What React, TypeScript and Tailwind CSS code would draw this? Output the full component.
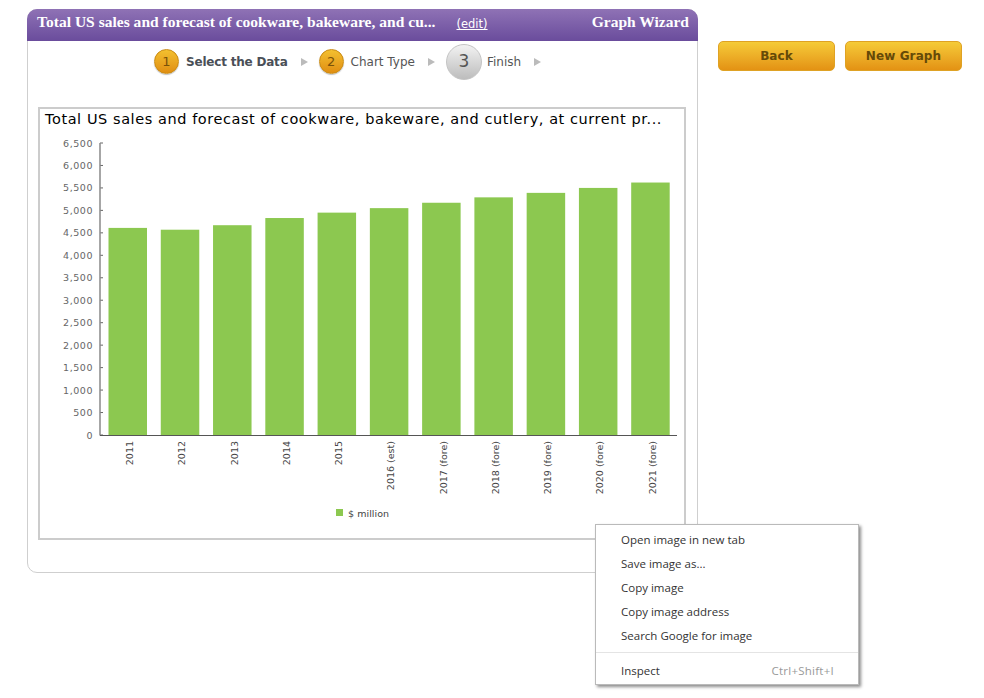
const years = ["2011", "2012", "2013", "2014", "2015", "2016 (est)", "2017 (fore)", "2018 (fore)", "2019 (fore)", "2020 (fore)", "2021 (fore)"];
const values = [4610, 4570, 4670, 4830, 4950, 5050, 5170, 5290, 5390, 5500, 5620];
const ticks = Array.from({ length: 14 }, (_, i) => i * 500);

// chart svg sits inside the 2px box border, so coords are page minus (40, 109)
function Chart() {
  const zero = 326;
  const perUnit = 292 / 6500;
  return (
    <svg width="644" height="429" viewBox="0 0 644 429" className="block">
      {ticks.map((t) => {
        const y = zero - t * perUnit;
        return (
          <g key={t}>
            <line x1="60" x2="63" y1={y} y2={y} stroke="#666" />
            <text x="53" y={y + 3.5} textAnchor="end" fontSize="9.5" letterSpacing="0.55" fill="#666" fontFamily="'DejaVu Sans', sans-serif">
              {t.toLocaleString("en-US")}
            </text>
          </g>
        );
      })}
      {values.map((v, i) => {
        const x = 68.5 + i * 52.27;
        const h = v * perUnit;
        return <rect key={years[i]} x={x} y={zero - h} width="38.5" height={h} fill="#8cc850" />;
      })}
      <line x1="60" x2="60" y1="34" y2="326.5" stroke="#888" strokeWidth="1.5" />
      <line x1="60" x2="637" y1="326.5" y2="326.5" stroke="#555" />
      {years.map((y, i) => {
        const x = 93 + i * 52.27;
        return (
          <text key={y} transform={`translate(${x} 332) rotate(-90)`} textAnchor="end" fontSize="9.5" fill="#444" fontFamily="'DejaVu Sans', sans-serif">
            {y}
          </text>
        );
      })}
      <rect x="296" y="400" width="7" height="7" fill="#8cc850" />
      <text x="308" y="408" fontSize="9.5" letterSpacing="0.05" fill="#444" fontFamily="'DejaVu Sans', sans-serif">
        $ million
      </text>
    </svg>
  );
}

function Arrow() {
  return <span className="w-0 h-0 border-y-[4px] border-y-transparent border-l-[7px] border-l-[#bbbbbb]" />;
}

function Step({ n, label, bold, className }: { n: number; label: string; bold?: boolean; className: string }) {
  return (
    <div className={`flex items-center ${className}`}>
      <span className="flex items-center justify-center w-[25px] h-[25px] rounded-full border border-[#c98a12] bg-gradient-to-b from-[#f3c02f] to-[#e08e12] text-[13px] text-[#7a5208] shrink-0 shadow-[0_1px_1px_rgba(0,0,0,0.25)]">
        {n}
      </span>
      <span className={`ml-[7px] text-[12px] ${bold ? "font-bold tracking-[-0.2px] text-[#4a4f57]" : "text-[#555]"}`}>{label}</span>
    </div>
  );
}

function WizardCard() {
  return (
    <div className="w-[671px] h-[564px] rounded-[10px] border border-[#cfcfcf] flex flex-col shrink-0">
      <div className="-mx-px -mt-px h-[32px] rounded-t-[10px] bg-gradient-to-b from-[#8f72b5] to-[#6a4c9c] flex items-center pl-[10px] pr-[9px] text-white font-['Liberation_Serif',serif] font-bold">
        <span className="mb-[7px] text-[15.5px] tracking-[0.02px] whitespace-nowrap">Total US sales and forecast of cookware, bakeware, and cu...</span>
        <span className="ml-[21px] text-[11.5px] font-normal underline font-['DejaVu_Sans',sans-serif]">(edit)</span>
        <span className="mb-[7px] ml-auto text-[15.5px]">Graph Wizard</span>
      </div>
      <div className="h-[66px] pt-px pl-[126px] flex items-start font-['DejaVu_Sans',sans-serif]">
        <Step n={1} label="Select the Data" bold className="mt-[7px]" />
        <span className="mt-[16px] ml-[13px] flex"><Arrow /></span>
        <Step n={2} label="Chart Type" className="mt-[7px] ml-[11px]" />
        <span className="mt-[16px] ml-[13px] flex"><Arrow /></span>
        <div className="flex items-center ml-[11px] mt-[2px]">
          <span className="flex items-center justify-center w-[36px] h-[36px] rounded-full border border-[#c4c4c4] bg-gradient-to-b from-[#f2f2f2] to-[#bdbdbd] text-[17px] text-[#555] shrink-0">
            3
          </span>
          <span className="ml-[5px] text-[12px] text-[#555]">Finish</span>
        </div>
        <span className="mt-[16px] ml-[13px] flex"><Arrow /></span>
      </div>
      <div className="mx-[10px] w-[648px] h-[433px] border-2 border-[#cccccc] relative">
        <div className="pl-[5px] h-[20px] text-[14.5px] leading-[20px] tracking-[0.57px] text-black whitespace-nowrap font-['DejaVu_Sans',sans-serif]">
          Total US sales and forecast of cookware, bakeware, and cutlery, at current pr...
        </div>
        <div className="absolute left-0 top-0">
          <Chart />
        </div>
      </div>
    </div>
  );
}

function ContextMenu() {
  const items = ["Open image in new tab", "Save image as...", "Copy image", "Copy image address", "Search Google for image"];
  return (
    <div className="absolute left-[595px] top-[524px] w-[264px] h-[161px] bg-white border border-[#bababa] shadow-[2px_2px_3px_rgba(0,0,0,0.45)] font-['Open_Sans',sans-serif] text-[11.5px] text-[#333] pt-[3px]">
      {items.map((t) => (
        <div key={t} className="h-[24px] leading-[24px] pl-[25px]">{t}</div>
      ))}
      <div className="h-px bg-[#e4e4e4] mt-[4px] mb-[6px]" />
      <div className="h-[24px] leading-[24px] pl-[25px] pr-[24px] flex justify-between">
        <span>Inspect</span>
        <span className="text-[#999] tracking-[0.25px]">Ctrl+Shift+I</span>
      </div>
    </div>
  );
}

function ActionButton({ label }: { label: string }) {
  return (
    <button className="w-[117px] h-[30px] rounded-[5px] border border-[#dfa224] bg-gradient-to-b from-[#f5cb38] to-[#e39213] text-[12px] tracking-[0.1px] font-bold text-[#654a08] font-['DejaVu_Sans',sans-serif]">
      {label}
    </button>
  );
}

export default function App() {
  return (
    <div className="relative w-[984px] h-[698px] bg-white overflow-hidden">
      <div className="flex items-start pl-[27px] pt-[9px]">
        <WizardCard />
        <div className="flex gap-[10px] ml-[20px] mt-[32px]">
          <ActionButton label="Back" />
          <ActionButton label="New Graph" />
        </div>
      </div>
      <ContextMenu />
    </div>
  );
}
